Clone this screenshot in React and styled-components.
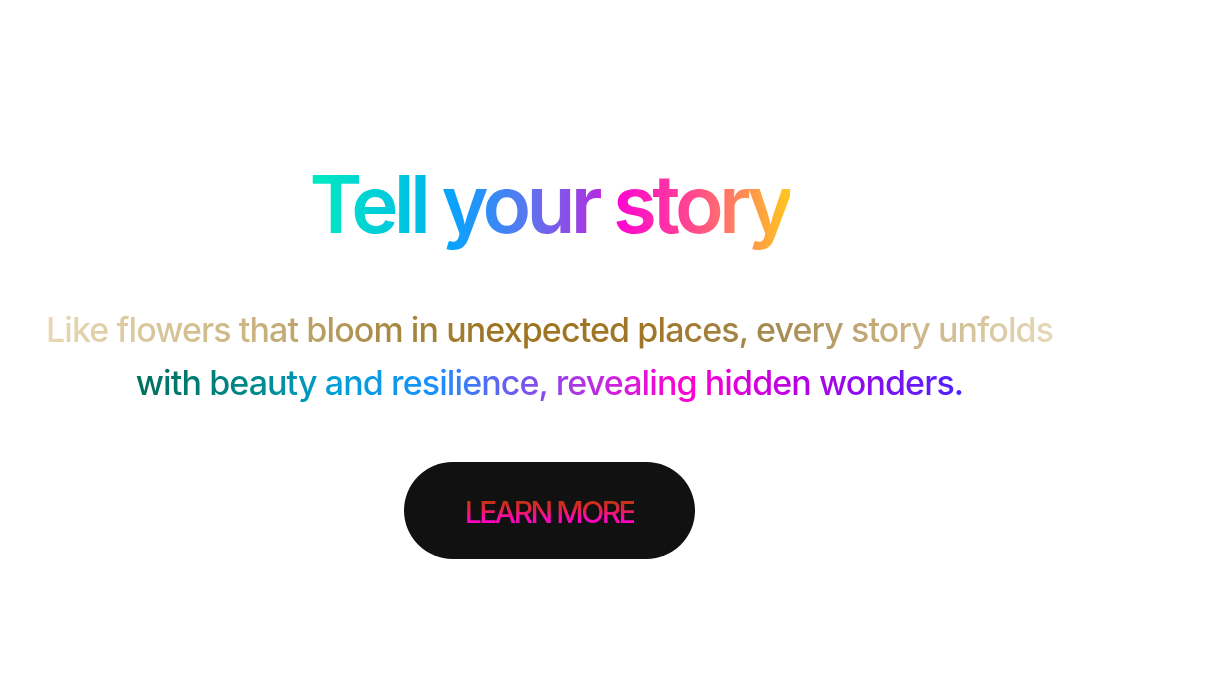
import React from "react";
import styled, { createGlobalStyle } from "styled-components";

const Global = createGlobalStyle`
  html, body { margin: 0; padding: 0; background: #ffffff; }
  body { font-family: Inter, "Noto Sans", sans-serif; }
`;

const Page = styled.main`
  width: 1099px;
  min-height: 676px;
  display: flex;
  flex-direction: column;
  align-items: center;
  padding-top: 156px;
  box-sizing: border-box;
`;

const Title = styled.h1`
  margin: 0;
  font-size: 80px;
  font-weight: 600;
  letter-spacing: -4.75px;
  line-height: 96px;
  background: linear-gradient(90deg, #00ecc0 0%, #00bce8 24%, #00a8ff 28%, #5878f0 45%, #b030e0 60%, #ff00d8 63%, #ff4a8c 80%, #ff8a58 90%, #ffc81c 100%);
  -webkit-background-clip: text;
  background-clip: text;
  color: transparent;
`;

const Lines = styled.div`
  margin-top: 57px;
  display: flex;
  flex-direction: column;
  align-items: center;
  gap: 12px;
`;

const Line = styled.p`
  margin: 0;
  font-size: 34px;
  font-weight: 500;
  letter-spacing: -0.9px;
  line-height: 41px;
  background: ${(p) => p.$gradient};
  -webkit-background-clip: text;
  background-clip: text;
  color: transparent;
`;

const Button = styled.button`
  margin-top: 59px;
  width: 291px;
  height: 97px;
  border: none;
  border-radius: 49px;
  background: #111111;
  cursor: pointer;
  display: flex;
  align-items: center;
  justify-content: center;
  padding: 0;
`;

const ButtonLabel = styled.span`
  font-family: Inter, "Noto Sans", sans-serif;
  font-size: 30px;
  font-weight: 500;
  letter-spacing: -2.5px;
  line-height: 36px;
  padding-top: 2px;
  background: linear-gradient(180deg, #c83018 28%, #e6204e 48%, #ff08b0 68%, #ff00c8 85%);
  -webkit-background-clip: text;
  background-clip: text;
  color: transparent;
`;

const goldGradient =
  "linear-gradient(90deg, #e8d8b4 0%, #cbb684 20%, #a88c48 33%, #9c7420 45%, #a07628 60%, #a48a50 72%, #c4ae7c 83%, #e6d8b8 100%)";
const colorGradient =
  "linear-gradient(90deg, #006e5c 0%, #008a8e 15%, #00a0d4 24%, #1a90ff 36%, #8050ea 48%, #d020dc 58%, #ff00d0 67%, #b800e4 80%, #8010f0 90%, #4a24ff 100%)";

export default function App() {
  return (
    <>
      <Global />
      <Page>
        <Title>Tell your story</Title>
        <Lines>
          <Line $gradient={goldGradient}>
            Like flowers that bloom in unexpected places, every story unfolds
          </Line>
          <Line $gradient={colorGradient}>
            with beauty and resilience, revealing hidden wonders.
          </Line>
        </Lines>
        <Button>
          <ButtonLabel>LEARN MORE</ButtonLabel>
        </Button>
      </Page>
    </>
  );
}
